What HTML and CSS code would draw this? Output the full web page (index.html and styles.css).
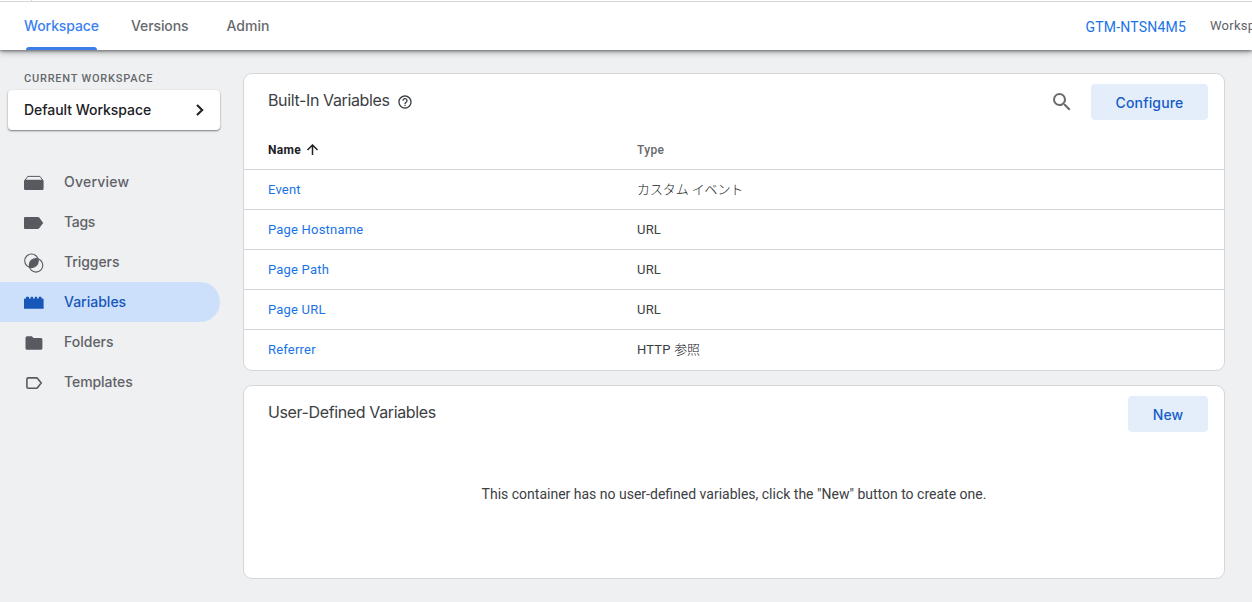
FILE: index.html
```html
<!DOCTYPE html>
<html lang="en">
<head>
<meta charset="utf-8">
<title>Variables</title>
<link rel="stylesheet" href="styles.css">
</head>
<body>
<header class="topbar">
  <nav class="tabs">
    <a class="tab tab-active"><span class="t-workspace">Workspace</span></a>
    <a class="tab"><span class="t-versions">Versions</span></a>
    <a class="tab"><span class="t-admin">Admin</span></a>
  </nav>
  <div class="container-info">
    <a class="container-id">GTM-NTSN4M5</a>
    <span class="container-ws">Workspace</span>
  </div>
</header>
<div class="body">
  <aside class="sidebar">
    <div class="side-label">CURRENT WORKSPACE</div>
    <div class="ws-picker">
      <span class="ws-name">Default Workspace</span>
      <svg class="chevron" width="10" height="14" viewBox="0 0 10 14"><path d="M2 1.900L7.200 7L2 12.100" fill="none" stroke="#202124" stroke-width="2.100"/></svg>
    </div>
    <nav class="menu">
      <a class="item">
        <svg width="20" height="20" viewBox="0 0 20 20"><path d="M1.200 7L3.700 3.400H16L18.600 7" fill="none" stroke="currentColor" stroke-width="1"/><rect x="0" y="6.800" width="19.600" height="10.300" rx="1.300" fill="currentColor"/></svg>
        <span class="m-overview">Overview</span></a>
      <a class="item">
        <svg width="20" height="20" viewBox="0 0 20 20"><path d="M1 4H13.900Q14.700 4 15.200 4.600L19.200 10L15.200 15.300Q14.700 16 13.900 16H1Q0 16 0 15V5Q0 4 1 4Z" fill="currentColor"/></svg>
        <span class="m-tags">Tags</span></a>
      <a class="item">
        <svg width="20" height="20" viewBox="0 0 20 20"><g fill="none" stroke="currentColor" stroke-width="1.100"><circle cx="7.500" cy="7.800" r="6.800"/><circle cx="12" cy="12.300" r="6.800"/></g><path d="M5.300 13.900A6.800 6.800 0 0 1 14.200 6.200A6.800 6.800 0 0 1 5.300 13.900Z" fill="currentColor"/></svg>
        <span class="m-triggers">Triggers</span></a>
      <a class="item item-active">
        <svg width="20" height="20" viewBox="0 0 20 20"><path d="M1 5.500H2V4.200Q2 3.700 2.500 3.700H4.500Q5 3.700 5 4.200V5.500H6.700V4.200Q6.700 3.700 7.200 3.700H8.500Q9 3.700 9 4.200V5.500H10.700V4.200Q10.700 3.700 11.200 3.700H12.500Q13 3.700 13 4.200V5.500H14.700V4.200Q14.700 3.700 15.200 3.700H17Q17.500 3.700 17.500 4.200V5.500H18.600Q19.600 5.500 19.600 6.500V15H0V6.500Q0 5.500 1 5.500Z" fill="currentColor"/><path d="M0 14.500H19.600V16H0Z" fill="currentColor" opacity=".75"/></svg>
        <span class="m-variables">Variables</span></a>
      <a class="item">
        <svg width="20" height="20" viewBox="0 0 20 20"><path d="M3.100 3.300H7.800L9.600 5H16.900Q18.400 5 18.400 6.500V15.200Q18.400 16.700 16.900 16.700H3.100Q1.500 16.700 1.500 15.200V4.900Q1.500 3.300 3.100 3.300Z" fill="currentColor"/></svg>
        <span class="m-folders">Folders</span></a>
      <a class="item">
        <svg width="20" height="20" viewBox="0 0 20 20"><path d="M4.200 4.900H12.500Q13.200 4.900 13.600 5.500L17.200 10L13.600 14.500Q13.200 15.200 12.500 15.200H4.200Q2.900 15.200 2.900 13.900V6.200Q2.900 4.900 4.200 4.900Z" fill="none" stroke="currentColor" stroke-width="1.600"/></svg>
        <span class="m-templates">Templates</span></a>
    </nav>
  </aside>
  <main class="main">
    <section class="card card-builtin">
      <div class="card-head">
        <h2 class="title"><span class="h-builtin">Built-In Variables</span>
          <svg width="16" height="16" viewBox="0 0 24 24"><path fill="#3c4043" d="M11 18h2v-2h-2v2zm1-16C6.480 2 2 6.480 2 12s4.480 10 10 10 10-4.480 10-10S17.520 2 12 2zm0 18c-4.410 0-8-3.590-8-8s3.590-8 8-8 8 3.590 8 8-3.590 8-8 8zm0-14c-2.210 0-4 1.790-4 4h2c0-1.100.9-2 2-2s2 .9 2 2c0 2-3 1.750-3 5h2c0-2.250 3-2.500 3-5 0-2.210-1.790-4-4-4z"/></svg>
        </h2>
        <div class="actions">
          <svg width="24" height="24" viewBox="0 0 24 24"><path fill="#6b6b6b" d="M15.500 14h-.79l-.28-.27A6.471 6.471 0 0 0 16 9.500 6.500 6.500 0 1 0 9.500 16c1.610 0 3.090-.59 4.230-1.570l.27.280v.79l5 4.990L20.490 19l-4.990-5zm-6 0C7.010 14 5 11.990 5 9.500S7.010 5 9.500 5 14 7.010 14 9.500 11.990 14 9.500 14z"/></svg>
          <button class="btn btn-configure"><span>Configure</span></button>
        </div>
      </div>
      <div class="row row-head">
        <div class="cell name">Name <svg width="12" height="12" viewBox="0 0 12 12"><path d="M6.500 11V1.500M1.500 6L6.500 1L11.500 6" fill="none" stroke="#202124" stroke-width="1.500"/></svg></div>
        <div class="cell type">Type</div>
      </div>
      <div class="row"><a class="cell">Event</a><div class="cell jp">カスタム イベント</div></div>
      <div class="row"><a class="cell">Page Hostname</a><div class="cell">URL</div></div>
      <div class="row"><a class="cell">Page Path</a><div class="cell">URL</div></div>
      <div class="row"><a class="cell">Page URL</a><div class="cell">URL</div></div>
      <div class="row"><a class="cell">Referrer</a><div class="cell">HTTP <span class="jp">参照</span></div></div>
    </section>
    <section class="card card-user">
      <div class="card-head">
        <h2 class="title"><span class="h-user">User-Defined Variables</span></h2>
        <div class="actions"><button class="btn btn-new"><span>New</span></button></div>
      </div>
      <p class="empty">This container has no user-defined variables, click the "New" button to create one.</p>
    </section>
  </main>
</div>
</body>
</html>
```
FILE: styles.css
```css
* { box-sizing: border-box; }
body {
  margin: 0;
  height: 602px;
  overflow: hidden;
  background: #eff0f2;
  font-family: Roboto, "Noto Sans CJK JP", sans-serif;
  color: #3c4043;
}
svg { display: block; flex: none; }
.topbar {
  position: relative;
  height: 50px;
  padding-left: 24px;
  display: flex;
  justify-content: space-between;
  background:
    linear-gradient(#d5d6d7, #d5d6d7) 31px 0 / 1px 1px no-repeat,
    linear-gradient(#fff 1px, #d5d6d7 1px, #d5d6d7 2px, #fff 2px);
  box-shadow: 0 1px 3px rgba(0,0,0,.45), 0 2px 7px rgba(0,0,0,.3);
}
.tabs { display: flex; font: 500 14px/20px Inter, sans-serif; color: #66696d; }
.tab { height: 50px; padding-top: 16px; margin-right: 32px; white-space: nowrap; }
.tab-active { color: #3b82f0; width: 75px; display: flex; flex-direction: column; justify-content: space-between; }
.tab-active::after { content: ""; height: 3px; width: 71px; margin-left: 2px; background: #3b7eea; border-radius: 3px 3px 0 0; }
.tab:nth-child(2) { width: 63.500px; }
.t-workspace, .t-versions { letter-spacing: -.1px; }
.container-info { width: 166.500px; display: flex; overflow: hidden; white-space: nowrap; }
.container-id { width: 124.500px; flex: none; padding-top: 17px; font-size: 14px; line-height: 20px; letter-spacing: .2px; color: #1a73e8; }
.container-ws { padding-top: 16px; font-size: 13px; line-height: 20px; letter-spacing: .25px; color: #5f6368; }
.body { display: flex; }
.sidebar { width: 243px; padding-top: 21px; }
.side-label { margin-left: 24px; height: 19px; font-size: 11px; font-weight: 500; line-height: 16px; letter-spacing: .78px; color: #66696d; }
.ws-picker {
  display: flex; align-items: center; justify-content: space-between;
  width: 212px; height: 40px; margin-left: 8px; padding: 0 15px 0 16px;
  background: #fff; border-radius: 4px;
  box-shadow: 0 1px 2px rgba(0,0,0,.5);
  font: 500 14px/20px Inter, sans-serif; letter-spacing: -.04px; color: #202124;
}
.menu { margin-top: 32px; width: 220px; }
.item { display: flex; align-items: center; height: 40px; padding-left: 24px; gap: 20px; font: 500 14px/20px Inter, sans-serif; color: #5f6266; }
.item svg { position: relative; top: 1px; color: #575b60; }
.m-overview { letter-spacing: .22px; }
.m-tags { letter-spacing: -.3px; }
.m-triggers, .m-templates { letter-spacing: -.07px; }
.item-active { background: #cde0fb; color: #1657b8; border-radius: 0 20px 20px 0; }
.item-active svg { color: #1657b8; }
.main { width: 982px; padding-top: 23px; }
.card { background: #fff; border: 1px solid #d5d7da; border-radius: 9px; }
.card-builtin { height: 298px; margin-bottom: 14px; }
.card-user { height: 194px; }
.card-head { display: flex; justify-content: space-between; height: 56px; padding: 10px 16px 0 24px; }
.title { margin: 5px 0 0; display: flex; gap: 7.500px; font: 400 16px/22px Inter, sans-serif; letter-spacing: -.37px; color: #3c4043; }
.title svg { margin-top: 5px; }
.actions { display: flex; gap: 17px; }
.actions svg { margin-top: 6px; }
.btn { border: 0; padding: 2px 0 0; height: 36px; border-radius: 4px; background: #e4eefb; color: #155cc8; font: 500 14px/34px Inter, sans-serif; letter-spacing: .15px; }
.btn-configure { width: 117px; }
.btn-new { width: 80px; }
.row { display: grid; grid-template-columns: 369px 1fr; height: 40px; padding-left: 24px; align-items: center; border-top: 1px solid #d2d4d7; font-size: 13px; line-height: 20px; letter-spacing: .2px; }
.row a { color: #1a73e8; }
.row .jp { font-weight: 300; letter-spacing: -.1px; color: #151719; }
.row-head { height: 39px; border-top: 0; font-size: 12px; font-weight: 500; letter-spacing: .36px; color: #66696d; }
.name { display: flex; align-items: center; gap: 5px; font-weight: 700; color: #202124; }
.empty { margin: 42px 0 0; text-align: center; font-size: 14px; line-height: 20px; }
```
